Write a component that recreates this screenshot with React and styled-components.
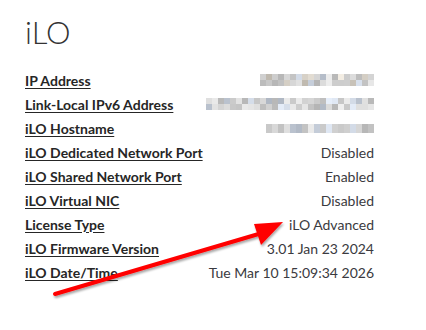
import React from "react";
import styled, { createGlobalStyle } from "styled-components";

const Global = createGlobalStyle`
  html, body { margin: 0; padding: 0; background: #fff; }
  body { font-family: "Lato", "Noto Sans", sans-serif; color: #333; }
`;

const Page = styled.div`
  position: relative;
  width: 426px;
  height: 330px;
  box-sizing: border-box;
  padding: 14px 52px 0 25px;
  overflow: hidden;
`;

const Title = styled.h1`
  margin: 0 0 18px 0;
  font-family: "Lato", sans-serif;
  font-weight: 300;
  font-size: 31px;
  line-height: 36px;
  color: #333;
`;

const List = styled.div`
  display: flex;
  flex-direction: column;
`;

const Row = styled.div`
  display: flex;
  justify-content: space-between;
  align-items: center;
  height: 24px;
`;

const Label = styled.span`
  font-weight: 700;
  font-size: 14px;
  color: #262626;
  text-decoration: underline;
  text-underline-offset: 2px;
  text-decoration-thickness: 1px;
`;

const Value = styled.span`
  font-size: 14px;
  color: #3a3a40;
`;

const Pixels = styled.div`
  display: grid;
  grid-template-columns: repeat(${(p) => p.$cols}, 6px);
  grid-auto-rows: ${(p) => p.$rowH}px;
`;

const Cell = styled.span`
  display: block;
`;

const Arrow = styled.svg`
  position: absolute;
  left: 0;
  top: 0;
  pointer-events: none;
`;

function rand(seed) {
  let s = seed;
  return () => {
    s = (s * 9301 + 49297) % 233280;
    return s / 233280;
  };
}

function Blur({ cols, rows, rowH, seed }) {
  const r = rand(seed);
  const cells = [];
  for (let i = 0; i < cols * rows; i++) {
    const v = Math.round(178 + r() * 62);
    const tint = r();
    const c =
      tint < 0.15
        ? `rgb(${v - 8},${v},${Math.min(255, v + 12)})`
        : tint < 0.25
        ? `rgb(${Math.min(255, v + 6)},${v},${v - 10})`
        : `rgb(${v},${v},${v})`;
    cells.push(<Cell key={i} style={{ background: c }} />);
  }
  return (
    <Pixels $cols={cols} $rowH={rowH}>
      {cells}
    </Pixels>
  );
}

const rows = [
  ["IP Address", <Blur cols={19} rows={2} rowH={6} seed={7} />],
  ["Link-Local IPv6 Address", <Blur cols={28} rows={2} rowH={6} seed={13} />],
  ["iLO Hostname", <Blur cols={18} rows={1} rowH={9} seed={29} />],
  ["iLO Dedicated Network Port", <Value>Disabled</Value>],
  ["iLO Shared Network Port", <Value>Enabled</Value>],
  ["iLO Virtual NIC", <Value>Disabled</Value>],
  ["License Type", <Value>iLO Advanced</Value>],
  ["iLO Firmware Version", <Value>3.01 Jan 23 2024</Value>],
  ["iLO Date/Time", <Value>Tue Mar 10 15:09:34 2026</Value>],
];

export default function App() {
  return (
    <>
      <Global />
      <Page>
        <Title>iLO</Title>
        <List>
          {rows.map(([l, v]) => (
            <Row key={l}>
              <Label>{l}</Label>
              {v}
            </Row>
          ))}
        </List>
        <Arrow width="426" height="330" viewBox="0 0 426 330">
          <defs>
            <filter id="sh" x="-10%" y="-10%" width="130%" height="140%">
              <feDropShadow dx="1" dy="2" stdDeviation="1.2" floodColor="#000" floodOpacity="0.35" />
            </filter>
          </defs>
          <g filter="url(#sh)">
            <line x1="55" y1="294" x2="262" y2="233" stroke="#f00" strokeWidth="4" strokeLinecap="round" />
            <polygon points="283,222 254,224 261,245" fill="#f00" />
          </g>
        </Arrow>
      </Page>
    </>
  );
}
